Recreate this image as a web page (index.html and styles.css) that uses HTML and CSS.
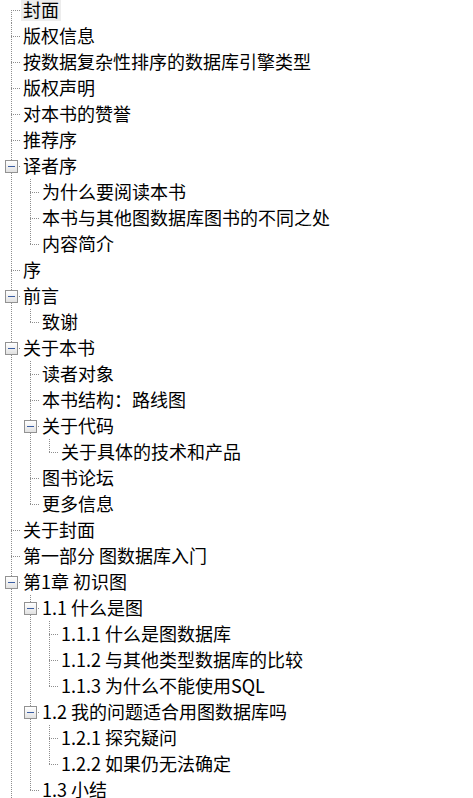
FILE: index.html
```html
<!DOCTYPE html>
<html lang="zh-CN">
<head>
<meta charset="utf-8">
<title>目录</title>
<link rel="stylesheet" href="styles.css">
</head>
<body>
<ul class="tree root">
  <li class="first"><div class="row"><span class="conn"></span><span class="label selected">封面</span></div></li>
  <li><div class="row"><span class="conn"></span><span class="label">版权信息</span></div></li>
  <li><div class="row"><span class="conn"></span><span class="label">按数据复杂性排序的数据库引擎类型</span></div></li>
  <li><div class="row"><span class="conn"></span><span class="label">版权声明</span></div></li>
  <li><div class="row"><span class="conn"></span><span class="label">对本书的赞誉</span></div></li>
  <li><div class="row"><span class="conn"></span><span class="label">推荐序</span></div></li>
  <li><div class="row"><span class="conn"><span class="toggle"><span class="minus"></span></span></span><span class="label">译者序</span></div>
    <ul class="tree">
      <li><div class="row"><span class="conn"></span><span class="label">为什么要阅读本书</span></div></li>
      <li><div class="row"><span class="conn"></span><span class="label">本书与其他图数据库图书的不同之处</span></div></li>
      <li class="last"><div class="row"><span class="conn"></span><span class="label">内容简介</span></div></li>
    </ul>
  </li>
  <li><div class="row"><span class="conn"></span><span class="label">序</span></div></li>
  <li><div class="row"><span class="conn"><span class="toggle"><span class="minus"></span></span></span><span class="label">前言</span></div>
    <ul class="tree">
      <li class="last"><div class="row"><span class="conn"></span><span class="label">致谢</span></div></li>
    </ul>
  </li>
  <li><div class="row"><span class="conn"><span class="toggle"><span class="minus"></span></span></span><span class="label">关于本书</span></div>
    <ul class="tree">
      <li><div class="row"><span class="conn"></span><span class="label">读者对象</span></div></li>
      <li><div class="row"><span class="conn"></span><span class="label">本书结构：路线图</span></div></li>
      <li><div class="row"><span class="conn"><span class="toggle"><span class="minus"></span></span></span><span class="label">关于代码</span></div>
        <ul class="tree">
          <li class="last"><div class="row"><span class="conn"></span><span class="label">关于具体的技术和产品</span></div></li>
        </ul>
      </li>
      <li><div class="row"><span class="conn"></span><span class="label">图书论坛</span></div></li>
      <li class="last"><div class="row"><span class="conn"></span><span class="label">更多信息</span></div></li>
    </ul>
  </li>
  <li><div class="row"><span class="conn"></span><span class="label">关于封面</span></div></li>
  <li><div class="row"><span class="conn"></span><span class="label">第一部分 图数据库入门</span></div></li>
  <li><div class="row"><span class="conn"><span class="toggle"><span class="minus"></span></span></span><span class="label">第1章 初识图</span></div>
    <ul class="tree">
      <li><div class="row"><span class="conn"><span class="toggle"><span class="minus"></span></span></span><span class="label">1.1 什么是图</span></div>
        <ul class="tree">
          <li><div class="row"><span class="conn"></span><span class="label">1.1.1 什么是图数据库</span></div></li>
          <li><div class="row"><span class="conn"></span><span class="label">1.1.2 与其他类型数据库的比较</span></div></li>
          <li class="last"><div class="row"><span class="conn"></span><span class="label">1.1.3 为什么不能使用SQL</span></div></li>
        </ul>
      </li>
      <li><div class="row"><span class="conn"><span class="toggle"><span class="minus"></span></span></span><span class="label">1.2 我的问题适合用图数据库吗</span></div>
        <ul class="tree">
          <li><div class="row"><span class="conn"></span><span class="label">1.2.1 探究疑问</span></div></li>
          <li class="last"><div class="row"><span class="conn"></span><span class="label">1.2.2 如果仍无法确定</span></div></li>
        </ul>
      </li>
      <li class="last"><div class="row"><span class="conn"></span><span class="label">1.3 小结</span></div></li>
    </ul>
  </li>
</ul>
</body>
</html>
```

FILE: styles.css
```css
html {
  overflow: hidden;
}

body {
  margin: 0;
  background: #ffffff;
  color: #000000;
  font-family: "Noto Sans CJK SC", "Noto Sans", sans-serif;
  font-size: 18px;
}

.tree {
  list-style: none;
  margin: 0;
  padding: 0;
}

.root {
  margin-top: -3px;
}

.tree .tree {
  padding-left: 19px;
}

li:not(.last) > .tree {
  background-image: repeating-linear-gradient(to bottom, #8e8e8e 0 1px, transparent 1px 2px);
  background-position: 11px 0;
  background-size: 1px 100%;
  background-repeat: no-repeat;
}

.row {
  display: flex;
  align-items: center;
  height: 26px;
}

.conn {
  flex: none;
  align-self: stretch;
  width: 21px;
  background-image:
    repeating-linear-gradient(to bottom, #8e8e8e 0 1px, transparent 1px 2px),
    repeating-linear-gradient(to right, #8e8e8e 0 1px, transparent 1px 2px);
  background-size: 1px 26px, 10px 1px;
  background-position: 11px 0, 11px 13px;
  background-repeat: no-repeat;
}

.last > .row > .conn {
  background-size: 1px 13px, 10px 1px;
}

.first > .row > .conn {
  background-size: 1px 13px, 10px 1px;
  background-position: 11px 13px, 11px 13px;
}

.toggle {
  display: block;
  box-sizing: border-box;
  width: 13px;
  height: 13px;
  margin: 7px 0 0 5px;
  border: 1px solid #929292;
  background: linear-gradient(#ffffff, #e2e2e2);
}

.minus {
  display: block;
  width: 7px;
  height: 1px;
  margin: 5px 0 0 2px;
  background: #3b5ea3;
}

.label {
  box-sizing: border-box;
  height: 21px;
  line-height: 19px;
  padding: 0 2px 2px;
  white-space: nowrap;
}

.selected {
  background: #ededed;
}
```
